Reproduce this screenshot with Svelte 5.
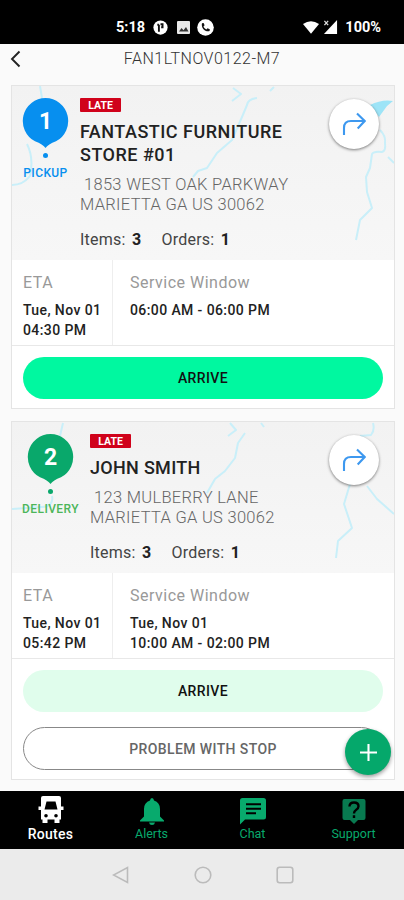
<script>
	const stops = [
		{
			number: 1,
			type: 'pickup',
			name: 'FANTASTIC FURNITURE STORE #01',
			street: '1853 WEST OAK PARKWAY',
			city: 'MARIETTA GA US 30062',
			items: 3,
			orders: 1,
			eta: ['Tue, Nov 01', '04:30 PM'],
			window: ['06:00 AM - 06:00 PM'],
			active: true,
			rivers: [
				'M28 0L30 12M15 58Q22 72 18 90Q11 99 0 99',
				'M221 2L229 8L220 15M262 1L258 5',
				'M245 12Q236 13 235 19L230 31L220 54L205 67L195 82L186 85L181 91',
				'M368 44Q374 50 373 57Q374 65 370 66Q362 65 360 68L358 82L354 91L355 106L360 122L348 134L344 154',
				'M376 71L382 77'
			],
			lake: 'M358 19Q370 13 381 15L375 20L367 31Z'
		},
		{
			number: 2,
			type: 'delivery',
			name: 'JOHN SMITH',
			street: '123 MULBERRY LANE',
			city: 'MARIETTA GA US 30062',
			items: 3,
			orders: 1,
			eta: ['Tue, Nov 01', '05:42 PM'],
			window: ['Tue, Nov 01', '10:00 AM - 02:00 PM'],
			active: false,
			rivers: [
				'M51 1L48 14M40 74Q42 84 30 85L0 87',
				'M218 1L224 8L216 14M249 1L252 5',
				'M233 11L226 21L223 36L213 49L203 57L195 71',
				'M361 1Q363 8 359 13L348 14M338 62L332 82L340 106L326 119L324 136',
				'M355 64L365 77L382 92'
			]
		}
	];
</script>

<div class="screen">
	<div class="status">
		<span class="time">5:18</span>
		<svg class="s-dot" viewBox="0 0 16 16"><circle cx="8" cy="8" r="7.6" fill="#fff"/><path d="M6.3 12.5V5M6.3 5H4.6M8 4.5h2.2v3.2H8.7" fill="none" stroke="#111" stroke-width="2"/></svg>
		<svg class="s-pic" viewBox="0 0 13 13"><rect width="13" height="13" rx="1" fill="#e8e8e8"/><path d="M2 10.5 4.5 7l2 2.3L9 6l2.5 4.5z" fill="#333"/></svg>
		<svg class="s-call" viewBox="0 0 17 17"><circle cx="8.5" cy="8.5" r="8.3" fill="#fff"/><path d="M5 4.2 6.6 4l1 2.3-1.1 1.2c.6 1.3 1.5 2.2 2.8 2.9l1.2-1.2 2.3 1-.2 1.9C8.5 13.3 3.7 9 5 4.2z" fill="#111"/></svg>
		<span class="grow"></span>
		<svg class="s-wifi" viewBox="0 0 17 14"><path d="M0 3.3Q8.5-2.7 17 3.3L8.500 13.500z" fill="#fff"/></svg>
		<svg class="s-cell" viewBox="0 0 16 15"><path d="M15 0v15H1z" fill="#fff"/><path d="M0 0h8v6H0z" fill="#000"/><path d="m1.500 1 4 4.500m0-4.500-4 4.500" stroke="#ddd" stroke-width="1.400"/></svg>
		<span class="battery">100%</span>
	</div>

	<header>
		<svg class="back" viewBox="0 0 12 18"><path d="M9.500 1.500 2 9l7.500 7.500" fill="none" stroke="#222" stroke-width="1.900"/></svg>
		<h1>FAN1LTNOV0122-M7</h1>
	</header>

	<main>
		{#each stops as stop}
			<section class="card {stop.type}">
				<div class="head">
					<svg class="map" viewBox="0 0 382 174">
						{#each stop.rivers as river}
							<path d={river} fill="none" stroke="#c9eff9" stroke-width="2" stroke-linejoin="round"/>
						{/each}
						{#if stop.lake}<path d={stop.lake} fill="#9de4f7"/>{/if}
					</svg>
					<div class="marker">
						<div class="pin">
							<svg viewBox="0 0 47 60"><path d="M23.500 0A23 23 0 0 1 34 43.300Q26 46.500 23.500 50Q21 46.500 13 43.300A23 23 0 0 1 23.500 0z" fill="currentColor"/><circle cx="23.500" cy="57.400" r="2.500" fill="currentColor"/></svg>
							<b>{stop.number}</b>
						</div>
						<span class="type">{stop.type}</span>
					</div>
					<div class="info">
						<span class="late">LATE</span>
						<h2>{stop.name}</h2>
						<p class="address"><span class="street">{stop.street}</span><br>{stop.city}</p>
						<p class="counts"><span>Items: <b>{stop.items}</b></span><span>Orders: <b>{stop.orders}</b></span></p>
					</div>
					<button class="directions" aria-label="Directions">
						<svg viewBox="0 0 24 24" fill="none" stroke="#3d98ef" stroke-width="2.100"><path d="M2 23v-7q0-7 7-7h13M15 1.500 22.700 9l-7 7.500"/></svg>
					</button>
				</div>
				<div class="times">
					<div class="eta">
						<h3>ETA</h3>
						{#each stop.eta as line}<b>{line}</b>{/each}
					</div>
					<div class="window">
						<h3>Service Window</h3>
						{#each stop.window as line}<b>{line}</b>{/each}
					</div>
				</div>
				<div class="actions">
					<button class="btn" class:active={stop.active}>ARRIVE</button>
					{#if !stop.active}
						<button class="btn problem">PROBLEM WITH STOP</button>
					{/if}
				</div>
			</section>
		{/each}
		<button class="fab" aria-label="Add">
			<svg viewBox="0 0 18 18" stroke="#fff" stroke-width="2.200"><path d="M9 0v18M0 9h18"/></svg>
		</button>
	</main>

	<nav>
		<div class="tab current">
			<svg viewBox="0 0 28 28" fill="currentColor"><path fill-rule="evenodd" d="M4 2Q4 0 6 0h16q2 0 2 2v8.500h2.500v3.500H24v9.500h-1.500V27h-5v-3.500h-7V27h-5v-3.500H4V14H1.500v-3.500H4zM9.500 5.500 7.500 13.500h13l-2-8zM9 18a1.800 1.800 0 1 0 0 3.600A1.800 1.800 0 0 0 9 18zm10 0a1.800 1.800 0 1 0 0 3.600 1.800 1.800 0 0 0 0-3.600z"/></svg>
			<span>Routes</span>
		</div>
		<div class="tab">
			<svg viewBox="0 0 28 28" fill="currentColor"><path d="M14 1q1.700 0 2 2.500 6 2 6 8.500v7.500l4 4v1H2v-1l4-4V12q0-6.500 6-8.500Q12.300 1 14 1zM11 25.500h6q-.5 2.500-3 2.500t-3-2.500z"/></svg>
			<span>Alerts</span>
		</div>
		<div class="tab">
			<svg viewBox="0 0 28 28" fill="currentColor"><path fill-rule="evenodd" d="M3.500 1h21q2.500 0 2.500 2.500V20q0 2.500-2.500 2.500H6L1 27.500v-24Q1 1 3.500 1zM7 6.300v2h15v-2zm0 4.400v2h15v-2zm0 4.500v2h10v-2z"/></svg>
			<span>Chat</span>
		</div>
		<div class="tab">
			<svg viewBox="0 0 28 28"><path d="M4.500 2h19q2 0 2 2v17q0 2-2 2H18l-4 4-4-4H4.500q-2 0-2-2V4q0-2 2-2z" fill="#087a50"/><path d="M9.500 9.500q0-4 4.500-4t4.500 3.800q0 2.200-2.500 3.700-2 1.200-2 3.500M14 18.300v2.700" fill="none" stroke="#000" stroke-width="2.400"/></svg>
			<span>Support</span>
		</div>
	</nav>

	<div class="system">
		<svg viewBox="0 0 18 18"><path d="M15.500 1.500v15L1.500 9z"/></svg>
		<svg viewBox="0 0 18 18"><circle cx="9" cy="9" r="7.800"/></svg>
		<svg viewBox="0 0 18 18"><rect x="1.200" y="1.200" width="15.600" height="15.600" rx="2.500"/></svg>
	</div>
</div>

<style>
	:global(body) {
		margin: 0;
	}
	.screen {
		width: 404px;
		height: 900px;
		display: flex;
		flex-direction: column;
		overflow: hidden;
		background: #fafafa;
		font-family: Roboto, "Liberation Sans", sans-serif;
		color: #222;
	}
	h1, h2, h3, p {
		margin: 0;
		font-weight: 400;
	}
	svg {
		display: block;
		flex-shrink: 0;
	}
	button {
		font: inherit;
		padding: 0;
		border: 0;
	}

	.status {
		box-sizing: border-box;
		height: 44px;
		flex-shrink: 0;
		display: flex;
		align-items: center;
		padding: 11px 23px 0 116px;
		background: #000;
		color: #fff;
		font-size: 14.5px;
		font-weight: 700;
	}
	.time {
		width: 37px;
	}
	.s-dot {
		width: 15px;
		margin-right: 9px;
	}
	.s-pic {
		width: 13px;
		margin-right: 7px;
	}
	.s-call {
		width: 17px;
	}
	.grow {
		flex: 1;
	}
	.s-wifi {
		width: 16px;
		margin-right: 4px;
	}
	.s-cell {
		width: 15px;
		margin-right: 7px;
	}

	header {
		height: 29px;
		flex-shrink: 0;
		display: grid;
		grid-template-columns: 32px 1fr 32px;
		align-items: center;
	}
	.back {
		width: 12px;
		margin-left: 10px;
	}
	h1 {
		font-size: 16px;
		font-weight: 300;
		color: #333;
		text-align: center;
		letter-spacing: 0.5px;
	}

	main {
		position: relative;
		box-sizing: border-box;
		height: 718px;
		flex-shrink: 0;
		display: flex;
		flex-direction: column;
		gap: 11.5px;
		padding: 12px 9px 0 11px;
	}
	.card {
		border: 1px solid #e4e4e4;
		background: #fff;
	}
	.head {
		position: relative;
		display: flex;
		gap: 12px;
		padding: 12px 11px 10px;
		background: linear-gradient(#f2f2f2, #f7f7f7);
		overflow: hidden;
	}
	.map {
		position: absolute;
		top: 0;
		left: 0;
		width: 382px;
		height: 174px;
	}
	.marker {
		position: relative;
		display: flex;
		flex-direction: column;
		align-items: center;
		color: #078fef;
	}
	.pickup .marker {
		width: 45px;
	}
	.delivery .marker {
		width: 55px;
		color: #09a86b;
	}
	.pin {
		display: grid;
		width: 47px;
		height: 60px;
	}
	.pin svg, .pin b {
		grid-area: 1 / 1;
	}
	.pin b {
		z-index: 1;
		color: #fff;
		font-size: 23px;
		line-height: 47px;
		text-align: center;
	}
	.type {
		margin-top: 7px;
		font-size: 12px;
		line-height: 16px;
		font-weight: 500;
		letter-spacing: 0.4px;
		text-transform: uppercase;
	}
	.delivery .type {
		color: #4cb65a;
	}
	.info {
		position: relative;
		width: 240px;
	}
	.late {
		display: block;
		width: 41px;
		height: 14px;
		border-radius: 1px;
		background: #d0021b;
		color: #fff;
		font-size: 10.5px;
		line-height: 15px;
		font-weight: 700;
		text-align: center;
	}
	h2 {
		margin-top: 9px;
		font-size: 18px;
		line-height: 22.5px;
		font-weight: 500;
		letter-spacing: 0.5px;
	}
	.delivery h2 {
		letter-spacing: 0.3px;
	}
	.address {
		margin-top: 9px;
		font-size: 16.5px;
		line-height: 20px;
		font-weight: 300;
		letter-spacing: 0.3px;
		color: #666;
		white-space: nowrap;
	}
	.street {
		margin-left: 4px;
	}
	.counts {
		display: flex;
		gap: 20px;
		margin-top: 15px;
		font-size: 16px;
		line-height: 20px;
		letter-spacing: 0.25px;
		color: #444;
	}
	.counts b {
		margin-left: 2px;
		font-weight: 700;
		color: #222;
	}
	.directions {
		position: absolute;
		top: 13px;
		right: 15px;
		width: 50px;
		height: 50px;
		display: grid;
		place-items: center;
		border-radius: 50%;
		background: #fff;
		box-shadow: 0 1px 3px rgba(0, 0, 0, 0.5);
	}
	.directions svg {
		width: 24px;
	}

	.times {
		display: flex;
		height: 85px;
		border-bottom: 1px solid #e8e8e8;
	}
	.eta, .window {
		box-sizing: border-box;
		display: flex;
		flex-direction: column;
		padding: 13px 0 0 11px;
	}
	.eta {
		width: 101px;
		border-right: 1px solid #eee;
	}
	.window {
		padding-left: 17px;
	}
	h3 {
		margin-bottom: 7px;
		font-size: 16px;
		line-height: 20px;
		letter-spacing: 0.5px;
		color: #999;
	}
	.times b {
		font-size: 14px;
		line-height: 20px;
		font-weight: 500;
		letter-spacing: 0.4px;
		white-space: nowrap;
	}
	.actions {
		display: flex;
		flex-direction: column;
		gap: 15px;
		padding: 11px 11px 9px;
	}
	.btn {
		height: 42px;
		border-radius: 21px;
		background: #e0fdec;
		color: #111;
		font-size: 14px;
		font-weight: 500;
		letter-spacing: 0.4px;
	}
	.btn.active {
		background: #00f8a0;
	}
	.btn.problem {
		height: 43px;
		border: 1px solid #888;
		border-radius: 22px;
		background: #fff;
		color: #666;
	}
	.fab {
		position: absolute;
		right: 13px;
		bottom: 16px;
		width: 46px;
		height: 46px;
		display: grid;
		place-items: center;
		border-radius: 50%;
		background: #05a86b;
		box-shadow: 0 2px 4px rgba(0, 0, 0, 0.4);
	}
	.fab svg {
		width: 17px;
	}

	nav {
		box-sizing: border-box;
		height: 58px;
		flex-shrink: 0;
		display: grid;
		grid-template-columns: repeat(4, 1fr);
		padding-top: 5px;
		background: #000;
	}
	.tab {
		display: flex;
		flex-direction: column;
		align-items: center;
		color: #08aa6d;
		font-size: 12.5px;
		line-height: 18px;
	}
	.tab svg {
		width: 28px;
		height: 28px;
	}
	.tab:not(.current) svg {
		margin-top: 1px;
	}
	.current {
		color: #fff;
		font-size: 14px;
		line-height: 20px;
		font-weight: 500;
		letter-spacing: 0.3px;
	}

	.system {
		box-sizing: border-box;
		flex: 1;
		display: flex;
		align-items: center;
		justify-content: center;
		gap: 64px;
		padding-left: 2px;
		background: #ebebeb;
	}
	.system svg {
		width: 18px;
		fill: none;
		stroke: #bbb;
		stroke-width: 1.6;
	}
</style>
